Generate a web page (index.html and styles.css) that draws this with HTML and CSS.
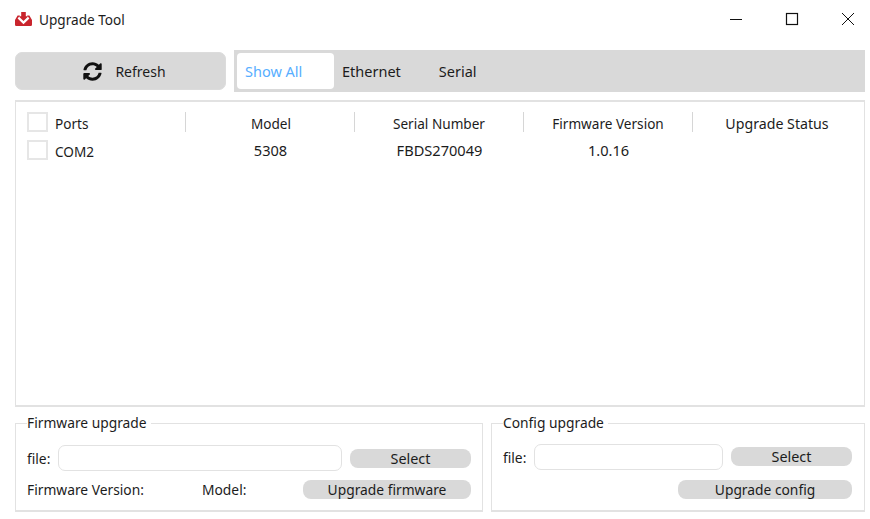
FILE: index.html
```html
<!DOCTYPE html>
<html lang="en">
<head>
<meta charset="utf-8">
<title>Upgrade Tool</title>
<link rel="stylesheet" href="styles.css">
</head>
<body>
<div class="window">
  <header class="titlebar">
    <div class="title">
      <svg class="logo" width="17" height="14" viewBox="0 0 17 14"><path fill="#c9252d" d="M6.2 0h4.6v4.2h2.6L8.5 9 3.6 4.2h2.6z"/><path fill="#c9252d" d="M2.6 3.6H5L2.6 6.4v.2l5.9 5.6 5.9-5.6v-.2L12 3.6h2.4L17 8v4.4c0 .9-.7 1.6-1.6 1.6H1.6C.7 14 0 13.3 0 12.4V8z"/></svg>
      <span class="title-text">Upgrade Tool</span>
    </div>
    <div class="controls">
      <svg width="14" height="14" viewBox="0 0 14 14"><path d="M1 7.5h12" stroke="#111" stroke-width="1" fill="none"/></svg>
      <svg width="14" height="14" viewBox="0 0 14 14"><rect x="1.5" y="1.5" width="11" height="11" stroke="#111" stroke-width="1.2" fill="none"/></svg>
      <svg width="14" height="14" viewBox="0 0 14 14"><path d="M1 1l12 12M13 1L1 13" stroke="#111" stroke-width="1" fill="none"/></svg>
    </div>
  </header>

  <div class="toolbar">
    <button class="refresh">
      <svg width="19" height="19" viewBox="0 0 512 512"><path fill="#111" d="M370.72 133.28C339.458 104.008 298.888 87.962 255.848 88c-77.458.068-144.328 53.178-162.791 126.85-1.344 5.363-6.122 9.15-11.651 9.15H24.103c-7.498 0-13.194-6.807-11.807-14.176C33.933 94.924 134.813 8 256 8c66.448 0 126.791 26.136 171.315 68.685L463.03 40.97C478.149 25.851 504 36.559 504 57.941V192c0 13.255-10.745 24-24 24H345.941c-21.382 0-32.09-25.851-16.971-40.971l41.75-41.749zM32 296h134.059c21.382 0 32.09 25.851 16.971 40.971l-41.75 41.75c31.262 29.273 71.835 45.319 114.876 45.28 77.418-.07 144.315-53.144 162.787-126.849 1.344-5.363 6.122-9.15 11.651-9.15h57.304c7.498 0 13.194 6.807 11.807 14.176C478.067 417.076 377.187 504 256 504c-66.448 0-126.791-26.136-171.315-68.685L48.97 471.03C33.851 486.149 8 475.441 8 454.059V320c0-13.255 10.745-24 24-24z"/></svg>
      <span>Refresh</span>
    </button>
    <nav class="tabs">
      <div class="tab tab-active">Show All</div>
      <div class="tab tab-ethernet">Ethernet</div>
      <div class="tab tab-serial">Serial</div>
    </nav>
  </div>

  <main class="table">
    <div class="row">
      <div class="cell cell-first"><span class="check"></span><span>Ports</span></div>
      <div class="cell sep cell-model">Model</div>
      <div class="cell sep">Serial Number</div>
      <div class="cell sep">Firmware Version</div>
      <div class="cell sep cell-status">Upgrade Status</div>
    </div>
    <div class="row row-data">
      <div class="cell cell-first"><span class="check"></span><span>COM2</span></div>
      <div class="cell num">5308</div>
      <div class="cell num">FBDS270049</div>
      <div class="cell num">1.0.16</div>
      <div class="cell"></div>
    </div>
  </main>

  <div class="groups">
    <fieldset class="group group-fw">
      <legend>Firmware upgrade</legend>
      <div class="line">
        <label>file:</label>
        <input class="file" type="text">
        <button class="btn btn-select">Select</button>
      </div>
      <div class="line line-2">
        <span class="fw-label">Firmware Version:</span>
        <span class="model-label">Model:</span>
        <button class="btn btn-upfw">Upgrade firmware</button>
      </div>
    </fieldset>
    <fieldset class="group group-cfg">
      <legend>Config upgrade</legend>
      <div class="line line-cfg">
        <label>file:</label>
        <input class="file" type="text">
        <button class="btn btn-select">Select</button>
      </div>
      <div class="line line-2 line-end">
        <button class="btn btn-upcfg">Upgrade config</button>
      </div>
    </fieldset>
  </div>
</div>
</body>
</html>
```
FILE: styles.css
```css
* { box-sizing: border-box; }
html, body { margin: 0; padding: 0; }
body {
  width: 870px;
  height: 519px;
  background: #fff;
  color: #1c1c1c;
  font-family: "Noto Sans", "Open Sans", sans-serif;
  font-size: 14px;
  overflow: hidden;
}
.window { padding: 0 5px 0 15px; }
.titlebar {
  display: flex;
  justify-content: space-between;
  align-items: center;
  height: 38px;
  margin-right: -5px;
}
.title {
  display: flex;
  align-items: center;
  gap: 7px;
  font-size: 13.6px;
}
.title-text { line-height: 20px; padding-top: 1px; }
.controls {
  display: flex;
  gap: 42px;
  padding-right: 15px;
}
.toolbar {
  display: flex;
  gap: 8px;
  align-items: center;
  height: 42px;
  margin-top: 12px;
}
.refresh {
  width: 211px;
  height: 38px;
  background: #d9d9d9;
  border: 1px solid #dcdcdc;
  border-radius: 7px;
  display: flex;
  align-items: center;
  justify-content: center;
  gap: 13px;
  font: inherit;
  color: inherit;
  padding: 0 0 0 8px;
}
.tabs {
  flex: 1;
  height: 42px;
  background: #d9d9d9;
  padding: 3px;
  display: flex;
  align-items: center;
  font-size: 14.5px;
}
.tab { height: 36px; line-height: 37px; }
.tab-active {
  width: 97px;
  background: #fff;
  border-radius: 4px;
  color: #57aeff;
  padding-left: 8px;
}
.tab-ethernet { margin-left: 8px; }
.tab-serial { margin-left: 38px; }
.table {
  height: 307px;
  margin-top: 8px;
  border: solid #e2e2e2;
  border-width: 2px 1px;
  padding: 10px 0 0 11px;
  font-size: 13.6px;
}
.row {
  display: grid;
  grid-template-columns: 158px repeat(4, 169px);
  height: 20px;
  align-items: center;
  text-align: center;
}
.row-data { margin-top: 8px; }
.cell { height: 20px; line-height: 23px; }
.cell-first {
  display: flex;
  gap: 7px;
  text-align: left;
}
.cell-model { padding-left: 2px; }
.cell-status { font-size: 14.2px; }
.row-data .num { line-height: 21px; font-size: 14.6px; padding-left: 2px; }
.sep { border-left: 1px solid #d6d6d6; }
.check {
  width: 21px;
  height: 20px;
  border: 2px solid #e6e6e6;
  background: #fff;
}
.groups {
  display: flex;
  gap: 8px;
  margin-top: 6px;
  font-size: 13.8px;
}
.group {
  margin: 0;
  padding: 0 11px;
  height: 99px;
  border: 2px solid #e2e2e2;
  border-width: 1px 1px 2px 1px;
  min-width: 0;
}
.group legend {
  padding: 0 4px 0 0;
  margin-left: 0;
  line-height: 20px;
  height: 20px;
}
.group-fw { width: 468px; }
.group-cfg { width: 374px; padding-right: 12px; }
.line {
  display: flex;
  align-items: center;
  height: 26px;
  margin-top: 12px;
}
.line-cfg { margin-top: 11px; }
.line-2 { margin-top: 9px; height: 19px; }
.line-cfg + .line-2 { margin-top: 10px; }
.line-end { justify-content: flex-end; }
.file {
  flex: 1;
  min-width: 0;
  height: 26px;
  margin: 0 8px 0 8px;
  border: 1px solid #e2e2e2;
  border-radius: 7px;
  background: #fff;
  outline: none;
}
.btn {
  height: 19px;
  padding: 0;
  background: #d9d9d9;
  border: 0;
  border-radius: 8px;
  font: inherit;
  color: inherit;
  line-height: 19px;
}
.btn-select { width: 121px; margin-top: 1px; font-size: 14.4px; }
.line-cfg .btn-select { margin-top: -1px; }
.btn-upfw { width: 168px; margin-left: auto; }
.btn-upcfg { width: 174px; }
.fw-label { width: 175px; }
```
